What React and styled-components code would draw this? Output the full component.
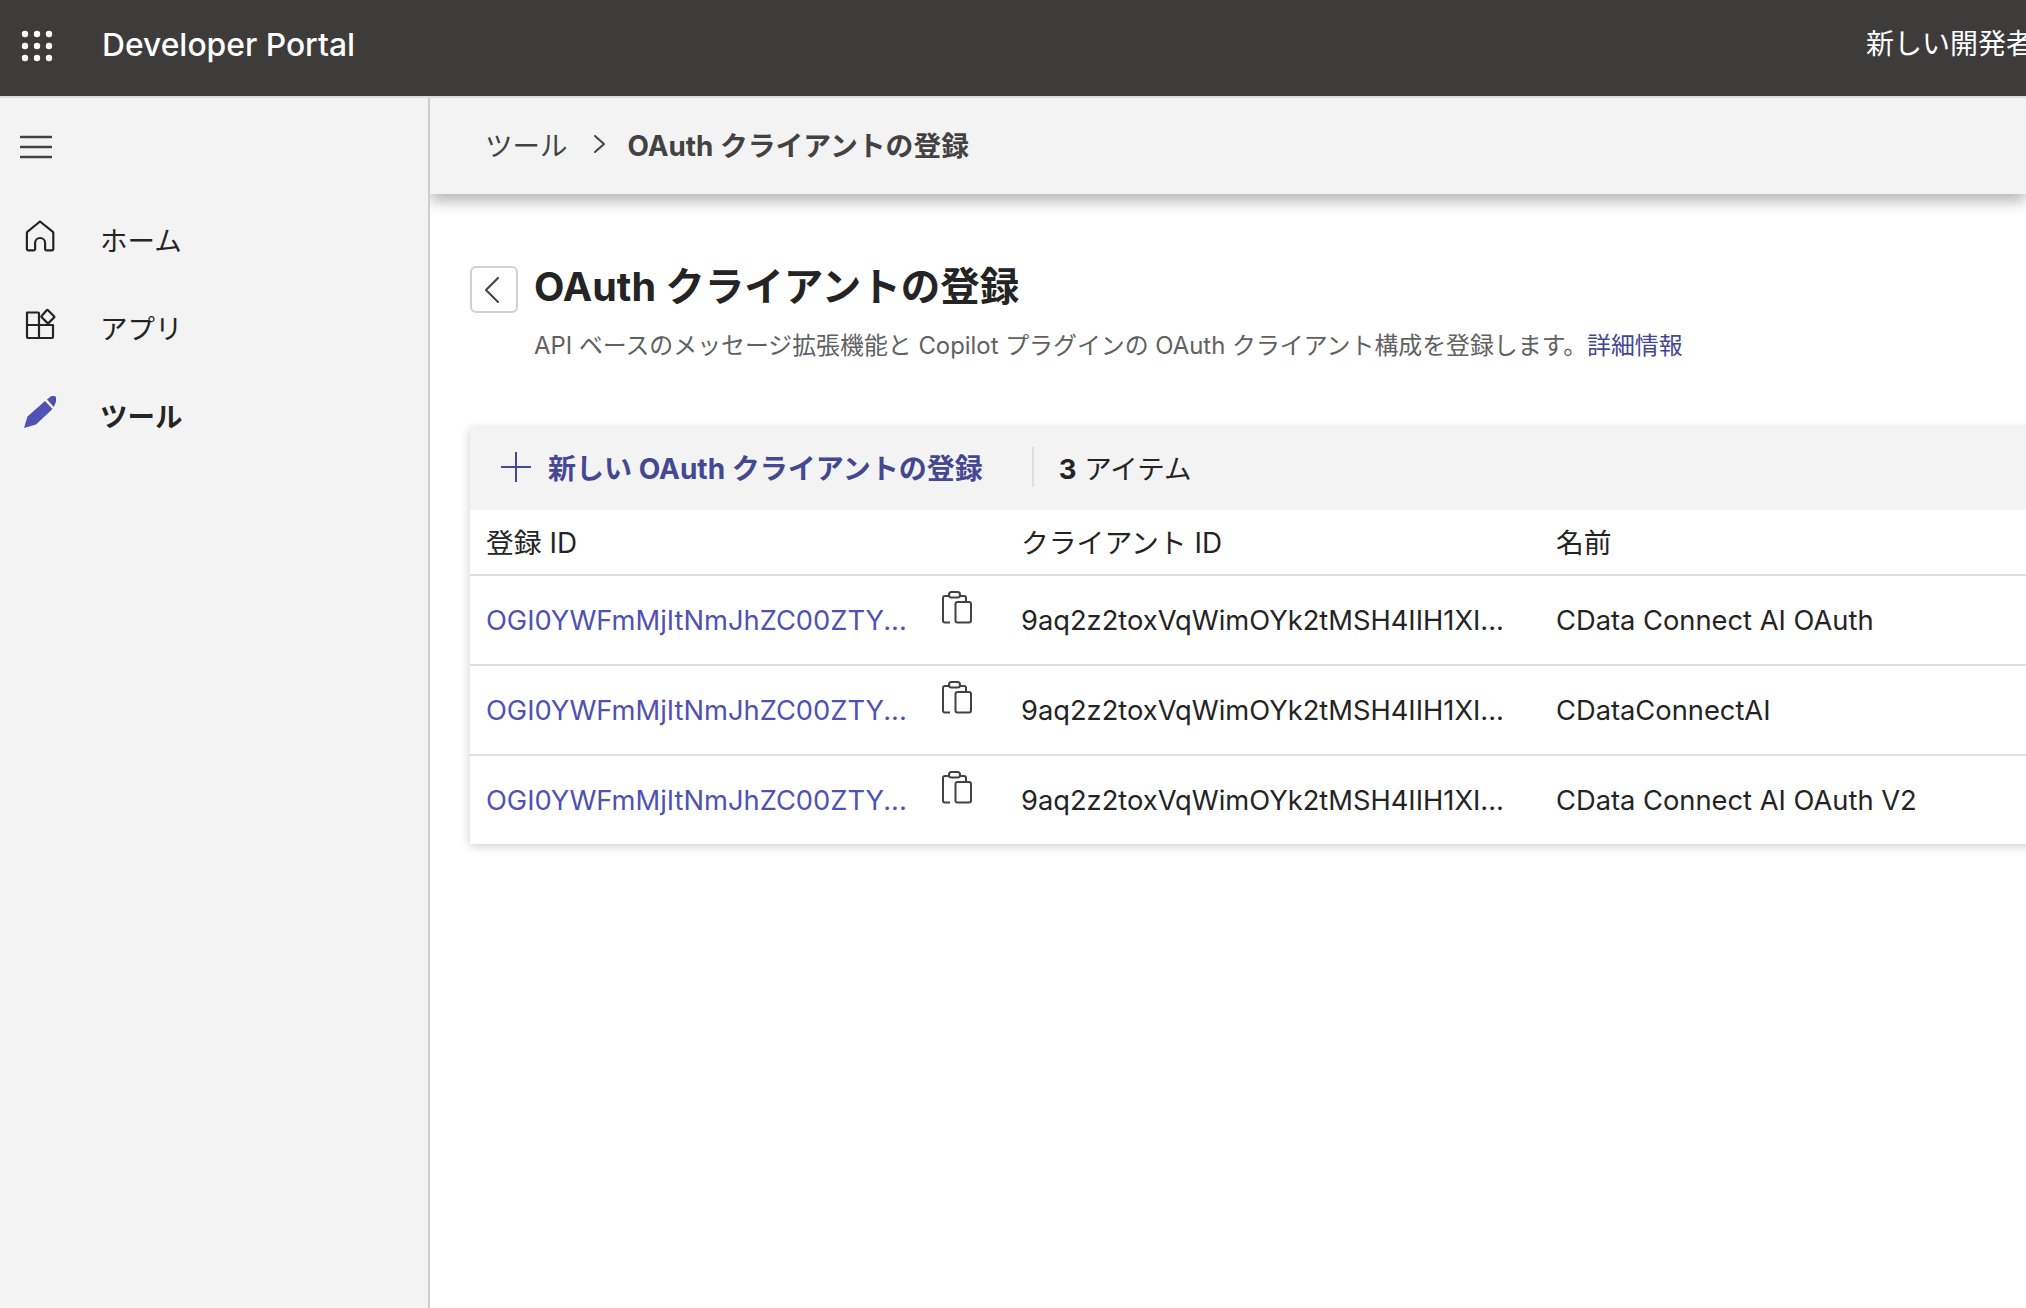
import styled, { createGlobalStyle } from "styled-components";

const GlobalStyle = createGlobalStyle`
  html, body {
    margin: 0;
    padding: 0;
    background: #fff;
  }
  body {
    font-family: Inter, "Noto Sans CJK JP", sans-serif;
    color: #242424;
  }
`;

const Page = styled.div`
  width: 2026px;
  height: 1308px;
  overflow: hidden;
  display: flex;
  flex-direction: column;
`;

const TopBar = styled.header`
  flex: none;
  height: 96px;
  background: #3d3c3b;
  border-bottom: 2px solid #dcdcdc;
  display: flex;
  align-items: center;
  color: #fff;
`;

const Waffle = styled.svg`
  width: 34px;
  height: 34px;
  margin-left: 20px;
  margin-top: -4px;
  flex: none;
`;

const AppName = styled.div`
  margin-left: 48px;
  font-size: 31.8px;
  font-weight: 500;
  margin-top: -7px;
  white-space: nowrap;
`;

const NewPortal = styled.div`
  margin-left: auto;
  width: 160px;
  overflow: hidden;
  white-space: nowrap;
  font-size: 28px;
  margin-top: -12px;
`;

const Body = styled.div`
  flex: 1;
  display: flex;
  min-height: 0;
`;

const Sidebar = styled.nav`
  flex: none;
  width: 428px;
  background: #f3f3f3;
  border-right: 2px solid #cdcdcd;
  padding-top: 37px;
`;

const Hamburger = styled.svg`
  display: block;
  width: 32px;
  height: 24px;
  margin-left: 20px;
  margin-bottom: 36px;
`;

const NavItem = styled.div`
  height: 88px;
  display: flex;
  align-items: center;
  font-size: 27.5px;
  font-weight: ${({ $active }) => ($active ? 700 : 400)};
  color: #242424;
`;

const NavIcon = styled.svg`
  flex: none;
  width: 32px;
  height: 32px;
  margin-left: 24px;
  margin-right: 44px;
  margin-top: -7px;
`;

const Main = styled.main`
  flex: 1;
  min-width: 0;
  overflow: hidden;
`;

const Breadcrumb = styled.div`
  position: relative;
  height: 96px;
  background: #f3f3f3;
  box-shadow: 0 7px 14px rgba(0, 0, 0, 0.3);
  display: flex;
  align-items: center;
  padding-left: 55px;
  font-size: 27.5px;
  color: #424242;
  padding-bottom: 4px;
  box-sizing: border-box;
`;

const Chevron = styled.svg`
  width: 16px;
  height: 24px;
  margin: 0 20px 0 24px;
`;

const CrumbCurrent = styled.span`
  font-size: 27.8px;
  font-weight: 700;
`;

const Content = styled.div`
  padding: 72px 0 0 40px;
`;

const TitleRow = styled.div`
  display: flex;
  align-items: center;
  gap: 16px;
`;

const BackButton = styled.button`
  width: 48px;
  height: 47px;
  padding: 0 4px 0 0;
  box-sizing: border-box;
  background: #fff;
  border: 2px solid #d1d1d1;
  border-radius: 6px;
  display: flex;
  align-items: center;
  justify-content: center;
`;

const Title = styled.h1`
  margin: -6px 0 0;
  font-size: 39.5px;
  line-height: 52px;
  font-weight: 700;
  color: #242424;
`;

const Subtitle = styled.p`
  margin: 16px 0 0 64px;
  font-size: 23.9px;
  line-height: 34px;
  color: #616161;
`;

const MoreLink = styled.a`
  color: #444791;
`;

const Card = styled.section`
  margin-top: 65px;
  width: 1700px;
  background: #fff;
  box-shadow: 0 2px 10px rgba(0, 0, 0, 0.2);
`;

const Toolbar = styled.div`
  height: 82px;
  background: #f3f3f3;
  display: flex;
  align-items: center;
  padding: 0 0 0 31px;
  box-sizing: border-box;
`;

const AddButton = styled.div`
  display: flex;
  align-items: center;
  gap: 17px;
  font-size: 28px;
  font-weight: 700;
  color: #444791;
  margin-top: -5px;
`;

const Divider = styled.div`
  width: 2px;
  height: 40px;
  background: #dedede;
  margin: -4px 25px 0 49px;
`;

const ItemCount = styled.div`
  font-size: 27.5px;
  color: #242424;
  margin-top: -5px;
`;

const Row = styled.div`
  display: grid;
  grid-template-columns: 535px 535px 1fr;
  align-items: center;
  height: ${({ $header }) => ($header ? "64px" : "88px")};
  border-bottom: ${({ $last }) => ($last ? "none" : "2px solid #e0e0e0")};
  font-size: ${({ $header }) => ($header ? "27.8px" : "27.3px")};
`;

const Cell = styled.div`
  padding-left: 16px;
  white-space: nowrap;
  color: #242424;
`;

const HeaderCell = styled(Cell)`
  margin-top: -2px;
`;

const IdCell = styled(Cell)`
  position: relative;
`;

const IdLink = styled.a`
  color: #4f52b2;
`;

const CopyIcon = styled.svg`
  position: absolute;
  left: 472px;
  top: -13px;
  width: 32px;
  height: 33px;
`;

function CopyGlyph() {
  return (
    <CopyIcon viewBox="0 0 32 33" fill="none" stroke="#424242" strokeWidth="2">
      <path d="M8 31.5H3a2 2 0 0 1-2-2V7a2 2 0 0 1 2-2h4" />
      <rect x="7" y="1" width="11" height="5.5" rx="2.5" />
      <path d="M18 5h4a2 2 0 0 1 2 2v4" />
      <rect x="13.5" y="11" width="15.5" height="20.5" rx="2" />
    </CopyIcon>
  );
}

const rows = [
  "CData Connect AI OAuth",
  "CDataConnectAI",
  "CData Connect AI OAuth V2",
];

const waffleDots = [5, 17, 29].flatMap((y) =>
  [5, 17, 29].map((x) => ({ x, y }))
);

export default function App() {
  return (
    <>
      <GlobalStyle />
      <Page>
        <TopBar>
          <Waffle viewBox="0 0 34 34" fill="#fff">
            {waffleDots.map(({ x, y }) => (
              <circle key={`${x}-${y}`} cx={x} cy={y} r="3.2" />
            ))}
          </Waffle>
          <AppName>Developer Portal</AppName>
          <NewPortal>新しい開発者</NewPortal>
        </TopBar>
        <Body>
          <Sidebar>
            <Hamburger viewBox="0 0 32 24" stroke="#424242" strokeWidth="2.6" strokeLinecap="round">
              <path d="M1 2h30M1 12h30M1 22h30" />
            </Hamburger>
            <NavItem>
              <NavIcon viewBox="0 0 32 32" fill="none" stroke="#242424" strokeWidth="2.2" strokeLinejoin="round">
                <path d="M16 1.5 3.6 11.6a2 2 0 0 0-.7 1.5V29a1.4 1.4 0 0 0 1.4 1.4h5.4a1.4 1.4 0 0 0 1.4-1.4v-6a5 5 0 0 1 10 0v6a1.4 1.4 0 0 0 1.4 1.4h5.4a1.4 1.4 0 0 0 1.4-1.4V13.1a2 2 0 0 0-.7-1.5z" />
              </NavIcon>
              ホーム
            </NavItem>
            <NavItem>
              <NavIcon viewBox="0 0 32 32" fill="none" stroke="#242424" strokeWidth="2.2" strokeLinejoin="round">
                <path d="M3 4.5h11a1 1 0 0 1 1 1V30H4a1 1 0 0 1-1-1zM3 17h26v12a1 1 0 0 1-1 1H15" />
                <path d="m24 2.2 6 6a1 1 0 0 1 0 1.4l-5.3 5.3a1 1 0 0 1-1.4 0l-5.6-5.6a1 1 0 0 1 0-1.4l5-5.7a1 1 0 0 1 1.3 0z" />
              </NavIcon>
              アプリ
            </NavItem>
            <NavItem $active>
              <NavIcon viewBox="0 0 32 32" fill="#4f52b2">
                <path d="M0 32 3.5 20.5 21 5l7.5 8L12 28.5z" />
                <path d="M23 3.5 26.5.8a3.8 3.8 0 0 1 5.2 5.6L29.8 11z" />
              </NavIcon>
              ツール
            </NavItem>
          </Sidebar>
          <Main>
            <Breadcrumb>
              ツール
              <Chevron viewBox="0 0 16 24" fill="none" stroke="#424242" strokeWidth="2" strokeLinecap="round" strokeLinejoin="round">
                <path d="m3 4 9 8-9 8" />
              </Chevron>
              <CrumbCurrent>OAuth クライアントの登録</CrumbCurrent>
            </Breadcrumb>
            <Content>
              <TitleRow>
                <BackButton aria-label="戻る">
                  <svg width="16" height="26" viewBox="0 0 16 26" fill="none" stroke="#424242" strokeWidth="2" strokeLinecap="round" strokeLinejoin="round">
                    <path d="M14 1 2 13l12 12" />
                  </svg>
                </BackButton>
                <Title>OAuth クライアントの登録</Title>
              </TitleRow>
              <Subtitle>
                API ベースのメッセージ拡張機能と Copilot プラグインの OAuth クライアント構成を登録します。
                <MoreLink>詳細情報</MoreLink>
              </Subtitle>
              <Card>
                <Toolbar>
                  <AddButton>
                    <svg width="30" height="30" viewBox="0 0 30 30" stroke="#444791" strokeWidth="2">
                      <path d="M15 0v30M0 15h30" />
                    </svg>
                    新しい OAuth クライアントの登録
                  </AddButton>
                  <Divider />
                  <ItemCount>
                    <b>3</b> アイテム
                  </ItemCount>
                </Toolbar>
                <Row $header>
                  <HeaderCell>登録 ID</HeaderCell>
                  <HeaderCell>クライアント ID</HeaderCell>
                  <HeaderCell>名前</HeaderCell>
                </Row>
                {rows.map((name, i) => (
                  <Row key={name} $last={i === rows.length - 1}>
                    <IdCell>
                      <IdLink>OGI0YWFmMjItNmJhZC00ZTY...</IdLink>
                      <CopyGlyph />
                    </IdCell>
                    <Cell>9aq2z2toxVqWimOYk2tMSH4IIH1XI...</Cell>
                    <Cell>{name}</Cell>
                  </Row>
                ))}
              </Card>
            </Content>
          </Main>
        </Body>
      </Page>
    </>
  );
}
